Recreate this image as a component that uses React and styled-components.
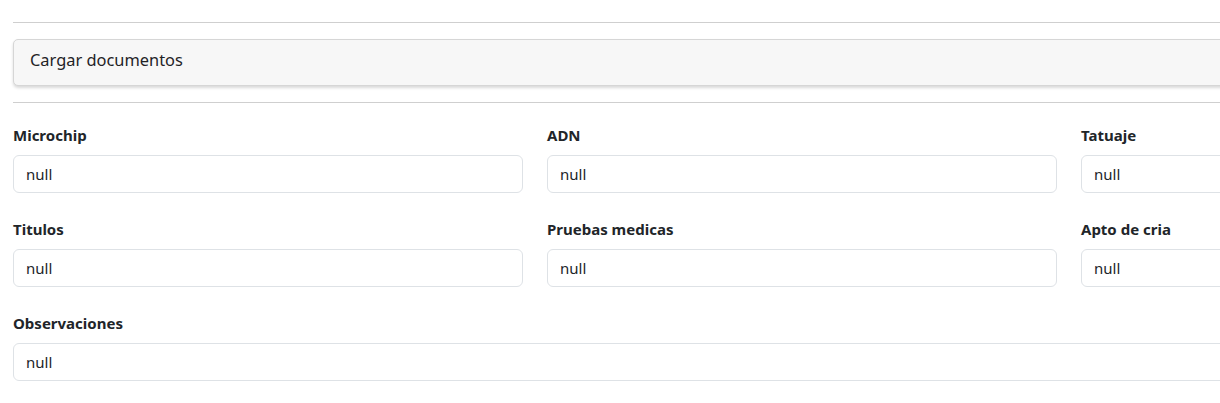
import React from "react";
import styled, { createGlobalStyle } from "styled-components";

const GlobalStyle = createGlobalStyle`
  html, body {
    margin: 0;
    padding: 0;
    background: #fff;
    overflow: hidden;
  }
  body {
    font-family: "Segoe UI", "Noto Sans", "Liberation Sans", sans-serif;
    color: #212529;
    font-size: 16px;
    line-height: 1.5;
  }
  * { box-sizing: border-box; }
`;

const Page = styled.div`
  width: 1604px;
  padding: 22px 13px 0 13px;
`;

const Rule = styled.hr`
  margin: 0;
  border: 0;
  border-top: 1px solid #cfcfcf;
`;

const Section = styled.div`
  margin: 16px 0;
  background: #f7f7f7;
  border: 1px solid #d6d6d6;
  border-radius: 5px;
  box-shadow: 0 2px 3px rgba(0, 0, 0, 0.15);
  padding: 8px 16px 13px;
  font-size: 16.4px;
  line-height: 24px;
  color: #1f2326;
`;

const Grid = styled.div`
  display: grid;
  grid-template-columns: repeat(3, 1fr);
  column-gap: 24px;
  row-gap: 24px;
  padding-top: 20px;
`;

const Field = styled.div`
  grid-column: ${({ wide }) => (wide ? "1 / -1" : "auto")};
  display: flex;
  flex-direction: column;
`;

const Label = styled.label`
  font-weight: 700;
  font-size: 15px;
  line-height: 24px;
  margin-bottom: 8px;
`;

const Input = styled.input`
  height: 38px;
  padding: 6px 12px;
  border: 1px solid #dee2e6;
  border-radius: 6px;
  font-family: inherit;
  font-size: 15px;
  color: #212529;
  background: #fff;
  outline: none;
`;

const fields = [
  { label: "Microchip" },
  { label: "ADN" },
  { label: "Tatuaje" },
  { label: "Titulos" },
  { label: "Pruebas medicas" },
  { label: "Apto de cria" },
  { label: "Observaciones", wide: true },
];

export default function App() {
  return (
    <>
      <GlobalStyle />
      <Page>
        <Rule />
        <Section>Cargar documentos</Section>
        <Rule />
        <Grid>
          {fields.map((f) => (
            <Field key={f.label} wide={f.wide}>
              <Label>{f.label}</Label>
              <Input readOnly value="null" />
            </Field>
          ))}
        </Grid>
      </Page>
    </>
  );
}
